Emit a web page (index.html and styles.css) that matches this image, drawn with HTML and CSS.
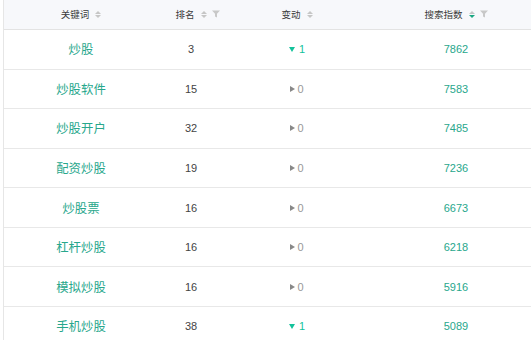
FILE: index.html
```html
<!DOCTYPE html>
<html lang="zh">
<head>
<meta charset="utf-8">
<link rel="stylesheet" href="styles.css">
</head>
<body>
<div class="table">
  <div class="row head">
    <div class="cell"><span class="title"><span class="htext">关键词</span><span class="sorter"><i class="up"></i><i class="down"></i></span></span></div>
    <div class="cell"><span class="title"><span class="htext">排名</span><span class="sorter"><i class="up"></i><i class="down"></i></span><svg class="filter" viewBox="0 0 8 8"><path d="M0 0.5H8L5 3.8V7.5L3 6.5V3.8Z"/></svg></span></div>
    <div class="cell"><span class="title"><span class="htext">变动</span><span class="sorter"><i class="up"></i><i class="down"></i></span></span></div>
    <div class="cell"><span class="title"><span class="htext">搜索指数</span><span class="sorter"><i class="up"></i><i class="down on"></i></span><svg class="filter inflow" viewBox="0 0 8 8"><path d="M0 0.5H8L5 3.8V7.5L3 6.5V3.8Z"/></svg></span></div>
  </div>
  <div class="row"><div class="cell kw">炒股</div><div class="cell num">3</div><div class="cell chg"><i class="tri-down"></i><span class="up">1</span></div><div class="cell idx">7862</div></div>
  <div class="row"><div class="cell kw">炒股软件</div><div class="cell num">15</div><div class="cell chg"><i class="tri-right"></i><span class="zero">0</span></div><div class="cell idx">7583</div></div>
  <div class="row"><div class="cell kw">炒股开户</div><div class="cell num">32</div><div class="cell chg"><i class="tri-right"></i><span class="zero">0</span></div><div class="cell idx">7485</div></div>
  <div class="row"><div class="cell kw">配资炒股</div><div class="cell num">19</div><div class="cell chg"><i class="tri-right"></i><span class="zero">0</span></div><div class="cell idx">7236</div></div>
  <div class="row"><div class="cell kw">炒股票</div><div class="cell num">16</div><div class="cell chg"><i class="tri-right"></i><span class="zero">0</span></div><div class="cell idx">6673</div></div>
  <div class="row"><div class="cell kw">杠杆炒股</div><div class="cell num">16</div><div class="cell chg"><i class="tri-right"></i><span class="zero">0</span></div><div class="cell idx">6218</div></div>
  <div class="row"><div class="cell kw">模拟炒股</div><div class="cell num">16</div><div class="cell chg"><i class="tri-right"></i><span class="zero">0</span></div><div class="cell idx">5916</div></div>
  <div class="row"><div class="cell kw">手机炒股</div><div class="cell num">38</div><div class="cell chg"><i class="tri-down"></i><span class="up">1</span></div><div class="cell idx">5089</div></div>
</div>
</body>
</html>
```
FILE: styles.css
```css
html, body {
  margin: 0;
  padding: 0;
  background: #fff;
  overflow: hidden;
  width: 531px;
  height: 340px;
}
body {
  font-family: "Liberation Sans", "Noto Sans CJK SC", sans-serif;
  color: #444;
}
.table {
  margin-left: 3px;
  width: 538px;
  border-left: 1px solid #e6e6e6;
  min-height: 340px;
}
.row {
  display: grid;
  grid-template-columns: 154px 66px 146px 172px;
  height: 39.57px;
  box-sizing: border-box;
  border-bottom: 1px solid #e8e8e8;
}
.row.head {
  height: 30px;
  background: #f7f8fb;
  border-bottom: 1px solid #e3e3e3;
}
.cell {
  display: flex;
  align-items: center;
  justify-content: center;
}
.head .cell {
  padding-bottom: 1px;
}
.title {
  position: relative;
  display: inline-flex;
  align-items: center;
}
.htext {
  font-size: 9.5px;
  color: #3a3a3a;
}
.sorter {
  display: inline-flex;
  flex-direction: column;
  gap: 1px;
  margin-left: 6px;
}
.sorter i {
  display: block;
  width: 0;
  height: 0;
  border-left: 3px solid transparent;
  border-right: 3px solid transparent;
}
.sorter .up {
  border-bottom: 3px solid #c6c6c6;
}
.sorter .down {
  border-top: 3px solid #c6c6c6;
}
.sorter .down.on {
  border-top-color: #1aa782;
}
.filter {
  position: absolute;
  left: 100%;
  top: 50%;
  margin-left: 5px;
  margin-top: -4px;
  width: 8px;
  height: 8px;
  fill: #c8c8c8;
}
.filter.inflow {
  position: static;
  margin-top: 0;
}
.kw {
  font-size: 12.4px;
  color: #28a78c;
}
.num {
  font-size: 11px;
  color: #444;
}
.idx {
  font-size: 11px;
  color: #28a78c;
}
.chg {
  font-size: 11px;
}
.tri-down {
  display: inline-block;
  width: 0;
  height: 0;
  border-left: 3.5px solid transparent;
  border-right: 3.5px solid transparent;
  border-top: 5px solid #14c29b;
  margin-right: 4px;
}
.tri-right {
  display: inline-block;
  width: 0;
  height: 0;
  border-top: 3.5px solid transparent;
  border-bottom: 3.5px solid transparent;
  border-left: 5px solid #888;
  margin-right: 2px;
}
.chg .up {
  color: #14c29b;
}
.chg .zero {
  color: #999;
}
```
